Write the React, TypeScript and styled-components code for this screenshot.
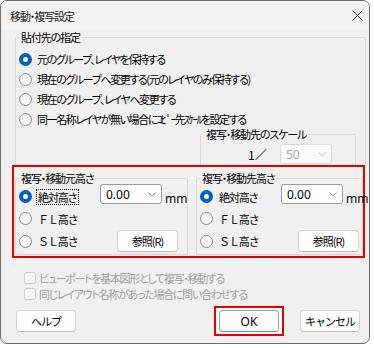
import React from "react";
import styled, { createGlobalStyle, css } from "styled-components";

const GlobalStyle = createGlobalStyle`
  html, body { margin: 0; padding: 0; background: #ffffff; }
  body {
    font-family: "Noto Sans CJK JP", "Noto Sans", sans-serif;
    font-size: 11px;
    letter-spacing: -1.1px;
    color: #000;
    font-feature-settings: "palt";
  }
  * { box-sizing: border-box; }
`;

const Window = styled.div`
  width: 370px;
  border: 1px solid #6e6e6e;
  border-radius: 7px;
  background: #f0f0f0;
  overflow: hidden;
`;

const TitleBar = styled.div`
  height: 29px;
  display: flex;
  align-items: center;
  justify-content: space-between;
  padding: 0 6px 0 9px;
  background: #f3f3f3;
`;

const Title = styled.span`
  font-size: 11px;
  color: #1a1a1a;
`;

const CloseButton = styled.span`
  width: 12px;
  height: 12px;
  display: flex;
  align-items: center;
  justify-content: center;
`;

const Body = styled.div`
  padding: 0 3px 7px 14px;
  display: flex;
  flex-direction: column;
`;

const Group = styled.fieldset`
  margin: 0;
  min-width: 0;
  border: 1px solid #d9d9d9;
  border-radius: 2px;
  padding: 0 0 3px 3px;
`;

const Legend = styled.legend`
  padding: 0 2px;
  margin-left: 0;
  line-height: 15px;
  font-size: 11px;
`;

const PasteGroup = styled(Group)`
  width: 351px;
  border-bottom: none;
  border-radius: 2px 2px 0 0;
  padding: 4px 0 0 3px;
  display: flex;
  flex-direction: column;
`;

const RadioRow = styled.label`
  height: 20px;
  display: flex;
  align-items: center;
  gap: 5px;
  white-space: nowrap;
  letter-spacing: -1.4px;
`;

const RadioDot = styled.span<{ $checked?: boolean }>`
  width: 13px;
  height: 13px;
  border-radius: 50%;
  flex: none;
  ${(p) =>
    p.$checked
      ? css`
          background: #ffffff;
          border: 4px solid #005fb8;
        `
      : css`
          background: #f7f7f7;
          border: 1px solid #8a8a8a;
        `}
`;

const FocusText = styled.span<{ $focused?: boolean; $fullWidth?: boolean }>`
  padding: 0 2px 0 1px;
  line-height: 14px;
  letter-spacing: -1.1px;
  outline: ${(p) => (p.$focused ? "1px dotted #000" : "none")};
  font-feature-settings: ${(p) => (p.$fullWidth ? "normal" : "\"palt\"")};
`;

const ScaleGroup = styled(Group)`
  width: 156px;
  align-self: flex-end;
  margin: -2px 9px 0 0;
  border-bottom: none;
  border-radius: 2px 2px 0 0;
  padding: 2px 0 1px 3px;
`;

const ScaleRow = styled.div`
  display: flex;
  align-items: center;
  height: 20px;
`;

const Ratio = styled.span`
  margin-left: 44px;
  width: 32px;
  font-size: 12px;
  letter-spacing: 0;
`;

const Combo = styled.div<{ $disabled?: boolean; $width: number }>`
  width: ${(p) => p.$width}px;
  height: 20px;
  display: flex;
  align-items: center;
  justify-content: space-between;
  padding: 0 5px 0 5px;
  border-radius: 3px;
  font-family: "Noto Sans", "Liberation Sans", sans-serif;
  font-size: 12px;
  letter-spacing: 0;
  ${(p) =>
    p.$disabled
      ? css`
          background: #fafafa;
          border: 1px solid #dadada;
          color: #a8a8a8;
        `
      : css`
          background: #ffffff;
          border: 1px solid #9a9a9a;
          color: #000;
        `}
`;

const Highlight = styled.div`
  width: 353px;
  margin-left: -3px;
  border: 2px solid #e60000;
  padding: 4px 0 1px 1px;
  display: flex;
  gap: 8px;
`;

const HeightGroup = styled(Group)<{ $width: number }>`
  width: ${(p) => p.$width}px;
  display: grid;
  grid-template-columns: 81px 62px auto;
  grid-template-rows: 21px 23px 22px;
  padding: 0 0 2px 3px;
`;

const HeightLegend = styled(Legend)`
  padding: 0 1px;
  margin-left: 1px;
`;

const GridRadio = styled(RadioRow)<{ $row: number }>`
  grid-column: 1;
  grid-row: ${(p) => p.$row};
  height: auto;
`;

const ComboCell = styled.div`
  grid-column: 2;
  grid-row: 1;
  align-self: start;
  margin-top: -2px;
`;

const Unit = styled.span`
  grid-column: 3;
  grid-row: 1;
  align-self: center;
  margin: 3px 0 0 3px;
  font-family: "Noto Sans", "Liberation Sans", sans-serif;
  font-size: 12px;
  letter-spacing: 0;
`;

const Button = styled.button<{ $default?: boolean }>`
  width: 60px;
  height: 22px;
  padding: 0;
  font-family: inherit;
  font-size: 11px;
  letter-spacing: -1px;
  white-space: nowrap;
  color: #000;
  background: #fdfdfd;
  border-radius: 4px;
  border: 1px solid ${(p) => (p.$default ? "#7fa9d9" : "#d3d3d3")};
  border-bottom-color: ${(p) => (p.$default ? "#5b8fcc" : "#bdbdbd")};
`;

const OkButton = styled(Button)`
  font-family: "Noto Sans", "Liberation Sans", sans-serif;
  font-size: 12px;
  letter-spacing: 0;
`;

const RefButton = styled(Button)`
  grid-column: 2 / span 2;
  grid-row: 3;
  width: 61px;
  margin-left: 17px;
  align-self: center;
`;

const Options = styled.div`
  margin-top: 12px;
  padding-left: 9px;
  display: flex;
  flex-direction: column;
`;

const CheckRow = styled.label`
  height: 16px;
  display: flex;
  align-items: center;
  gap: 3px;
  color: #a0a0a0;
  white-space: nowrap;
  letter-spacing: -1.3px;
`;

const CheckBox = styled.span`
  width: 12px;
  height: 12px;
  border: 1px solid #cccccc;
  border-radius: 3px;
  background: #f6f6f6;
  flex: none;
`;

const ButtonBar = styled.div`
  margin-top: 4px;
  padding-left: 1px;
  display: flex;
  align-items: center;
`;

const OkFrame = styled.div`
  margin-left: auto;
  margin-right: 16px;
  border: 2px solid #e60000;
  background: #ffffff;
  padding: 2px 3px;
  display: flex;
`;

const CancelButton = styled(Button)`
  margin-right: 6px;
`;

const Chevron = ({ color }: { color: string }) => (
  <svg width="8" height="5" viewBox="0 0 8 5">
    <path d="M0.5 0.5 L4 4 L7.5 0.5" fill="none" stroke={color} strokeWidth="1" />
  </svg>
);

const HeightPanel = ({
  title,
  width,
  focused,
}: {
  title: string;
  width: number;
  focused?: boolean;
}) => (
  <HeightGroup $width={width}>
    <HeightLegend>{title}</HeightLegend>
    <GridRadio $row={1}>
      <RadioDot $checked />
      <FocusText $focused={focused}>絶対高さ</FocusText>
    </GridRadio>
    <ComboCell>
      <Combo $width={62}>
        <span>0.00</span>
        <Chevron color="#808080" />
      </Combo>
    </ComboCell>
    <Unit>mm</Unit>
    <GridRadio $row={2}>
      <RadioDot />
      <FocusText $fullWidth>ＦＬ高さ</FocusText>
    </GridRadio>
    <GridRadio $row={3}>
      <RadioDot />
      <FocusText $fullWidth>ＳＬ高さ</FocusText>
    </GridRadio>
    <RefButton>参照(R)</RefButton>
  </HeightGroup>
);

export default function App() {
  return (
    <>
      <GlobalStyle />
      <Window>
        <TitleBar>
          <Title>移動・複写設定</Title>
          <CloseButton>
            <svg width="11" height="11" viewBox="0 0 11 11">
              <path d="M0.5 0.5 L10.5 10.5 M10.5 0.5 L0.5 10.5" stroke="#333" strokeWidth="1" />
            </svg>
          </CloseButton>
        </TitleBar>
        <Body>
          <PasteGroup>
            <Legend>貼付先の指定</Legend>
            <RadioRow>
              <RadioDot $checked />
              <span>元のグループ、レイヤを保持する</span>
            </RadioRow>
            <RadioRow>
              <RadioDot />
              <span>現在のグループへ変更する(元のレイヤのみ保持する)</span>
            </RadioRow>
            <RadioRow>
              <RadioDot />
              <span>現在のグループ、レイヤへ変更する</span>
            </RadioRow>
            <RadioRow>
              <RadioDot />
              <span>同一名称レイヤが無い場合にｺﾋﾟｰ先ｽｹｰﾙを設定する</span>
            </RadioRow>
            <ScaleGroup>
              <Legend>複写・移動先のスケール</Legend>
              <ScaleRow>
                <Ratio>1／</Ratio>
                <Combo $disabled $width={52}>
                  <span>50</span>
                  <Chevron color="#c0c0c0" />
                </Combo>
              </ScaleRow>
            </ScaleGroup>
          </PasteGroup>
          <Highlight>
            <HeightPanel title="複写・移動元高さ" width={173} focused />
            <HeightPanel title="複写・移動先高さ" width={167} />
          </Highlight>
          <Options>
            <CheckRow>
              <CheckBox />
              <span>ビューポートを基本図形として複写・移動する</span>
            </CheckRow>
            <CheckRow>
              <CheckBox />
              <span>同じレイアウト名称があった場合に問い合わせする</span>
            </CheckRow>
          </Options>
          <ButtonBar>
            <Button>ヘルプ</Button>
            <OkFrame>
              <OkButton $default>OK</OkButton>
            </OkFrame>
            <CancelButton>キャンセル</CancelButton>
          </ButtonBar>
        </Body>
      </Window>
    </>
  );
}
